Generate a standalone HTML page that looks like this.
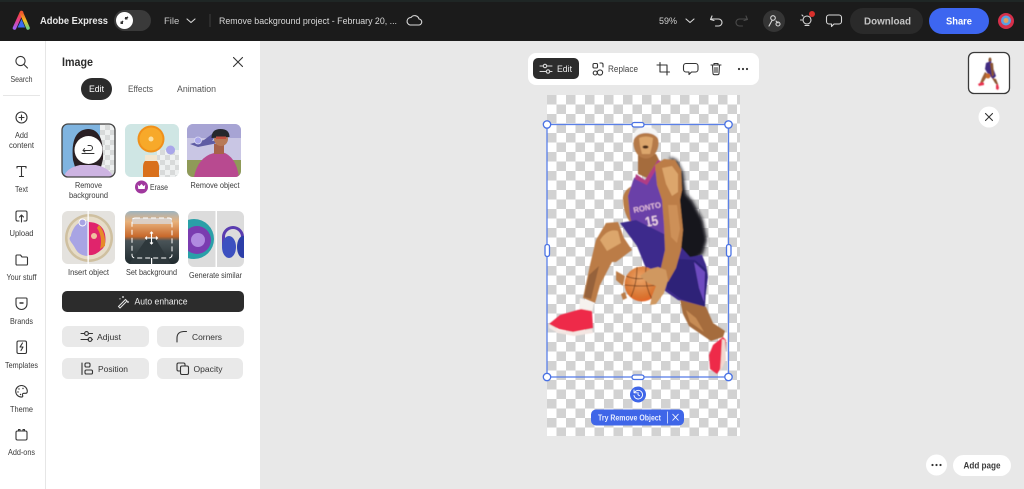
<!DOCTYPE html>
<html lang="en">
<head>
<meta charset="utf-8">
<title>Adobe Express</title>
<style>
html,body{margin:0;padding:0;width:1024px;height:489px;overflow:hidden;background:#e8e8e8}
svg{display:block;filter:blur(.35px)}
text{font-family:"Liberation Sans",sans-serif}
.l{font-size:8.4px;fill:#3a3a3a;text-anchor:middle}
.b{font-size:8.6px;fill:#333;}
.i{fill:none;stroke:#333;stroke-width:1.1;stroke-linecap:round;stroke-linejoin:round}
.w{fill:none;stroke:#d8d8d8;stroke-width:1.1;stroke-linecap:round;stroke-linejoin:round}
</style>
</head>
<body>
<svg width="1024" height="489" viewBox="0 0 1024 489" xmlns="http://www.w3.org/2000/svg">
<defs>
<pattern id="ck" x="547" y="95" width="19" height="19" patternUnits="userSpaceOnUse">
<rect width="19" height="19" fill="#fff"/>
<rect width="9.5" height="9.5" fill="#d2d2d2"/>
<rect x="9.5" y="9.5" width="9.5" height="9.5" fill="#d2d2d2"/>
</pattern>
<pattern id="ck2" x="0" y="0" width="10" height="10" patternUnits="userSpaceOnUse">
<rect width="10" height="10" fill="#eef0f0"/>
<rect width="5" height="5" fill="#d8dada"/>
<rect x="5" y="5" width="5" height="5" fill="#d8dada"/>
</pattern>
<clipPath id="c1"><rect x="62" y="124" width="53" height="53" rx="6"/></clipPath>
<clipPath id="c2"><rect x="125" y="124" width="54" height="53" rx="6"/></clipPath>
<clipPath id="c3"><rect x="187" y="124" width="54" height="53" rx="6"/></clipPath>
<clipPath id="c4"><rect x="62" y="211" width="53" height="53" rx="6"/></clipPath>
<clipPath id="c5"><rect x="125" y="211" width="54" height="53" rx="6"/></clipPath>
<clipPath id="c6"><rect x="188" y="211" width="56" height="56" rx="6"/></clipPath>
<linearGradient id="lgL" x1="0" y1="1" x2="0" y2="0"><stop offset="0" stop-color="#a060f0"/><stop offset=".5" stop-color="#e83e8c"/><stop offset="1" stop-color="#f04a30"/></linearGradient>
<linearGradient id="lgR" x1="0" y1="0" x2="0" y2="1"><stop offset="0" stop-color="#f2582c"/><stop offset=".5" stop-color="#f4c020"/><stop offset="1" stop-color="#70d080"/></linearGradient>
<linearGradient id="road" x1="0" y1="0" x2="0" y2="1"><stop offset="0" stop-color="#9fb4c0"/><stop offset=".2" stop-color="#e8b27c"/><stop offset=".48" stop-color="#c8692c"/><stop offset=".56" stop-color="#4a5458"/><stop offset="1" stop-color="#1f2a2e"/></linearGradient>
<radialGradient id="ballg" cx=".45" cy=".35" r=".75"><stop offset="0" stop-color="#eaa468"/><stop offset=".7" stop-color="#d9732f"/><stop offset="1" stop-color="#ee5a26"/></radialGradient>
<filter id="sb" x="-10%" y="-10%" width="120%" height="120%"><feGaussianBlur stdDeviation=".5"/></filter>
<filter id="sb2" x="-20%" y="-20%" width="140%" height="140%"><feGaussianBlur stdDeviation="1.5"/></filter>
</defs>

<!-- base -->
<rect width="1024" height="489" fill="#e8e8e8"/>

<!-- header -->
<rect width="1024" height="41" fill="#1b1b1b"/>
<rect width="1024" height="2" fill="#1f2625"/>
<path d="M21.500 12.500l-7 15.500" stroke="url(#lgL)" stroke-width="3.600" stroke-linecap="round" fill="none"/>
<path d="M21.500 13l6.500 15" stroke="url(#lgR)" stroke-width="3.600" stroke-linecap="round" fill="none"/>
<path d="M21.500 19l3.600 8.500h-7.500Z" fill="#3a6cf0"/>
<text x="40" y="24" font-size="10.200" font-weight="700" fill="#e8e8e8" textLength="68" lengthAdjust="spacingAndGlyphs">Adobe Express</text>
<rect x="114" y="10" width="37" height="21" rx="10.500" fill="#3a3a3a"/>
<circle cx="124.500" cy="20.500" r="8.500" fill="#fff"/>
<path d="M121 23l2-2M125 19l3-2" stroke="#333" stroke-width="1.500"/><rect x="120.500" y="21.500" width="2.500" height="2.500" fill="#333"/><rect x="125" y="17" width="2.500" height="2.500" fill="#333"/>
<text x="164" y="24" font-size="9.500" fill="#c8c8c8">File</text>
<path d="M187 19l4 3.500 4-3.500" class="w"/>
<path d="M210 14v13" stroke="#3c3c3c"/>
<text x="219" y="24" font-size="9.400" fill="#d8d8d8" textLength="178" lengthAdjust="spacingAndGlyphs">Remove background project - February 20, ...</text>
<path d="M410 25h8.500a3 3 0 0 0 .5-6 4.500 4.500 0 0 0-8-1.500 3.800 3.800 0 0 0-1 7.500Z" class="w"/>

<text x="659" y="24" font-size="9.500" fill="#d0d0d0" textLength="18" lengthAdjust="spacingAndGlyphs">59%</text>
<path d="M686 19l4 3.500 4-3.500" class="w"/>
<path d="M712 16l-1.500 3.500 3.500 1M711 19h7.500a3.500 3.500 0 0 1 0 7h-3" class="w"/>
<path d="M746 16l1.500 3.500-3.500 1M747 19h-7.500a3.500 3.500 0 0 0 0 7h3" fill="none" stroke="#4a4a4a" stroke-width="1.100" stroke-linecap="round" stroke-linejoin="round"/>
<circle cx="774" cy="21" r="11" fill="#353535"/>
<circle cx="773" cy="18" r="2.300" class="w"/><path d="M769 26l3-5.500M776 21l2 2" class="w"/><circle cx="778" cy="24" r="2" class="w"/>
<circle cx="807" cy="20" r="4" class="w"/><path d="M805 25.500h4M802 15l1 1M800.500 20h1.500" class="w"/>
<circle cx="812" cy="14" r="3" fill="#d9302c"/>
<path d="M829 15h10a2.500 2.500 0 0 1 2.500 2.500v4a2.500 2.500 0 0 1-2.500 2.500h-5l-2.500 2.500V24H829a2.500 2.500 0 0 1-2.500-2.500v-4A2.500 2.500 0 0 1 829 15Z" class="w"/>
<rect x="850" y="8" width="73" height="26" rx="13" fill="#2a2a2a"/>
<text x="887.500" y="24.500" font-size="10.500" font-weight="700" fill="#c4c4c4" text-anchor="middle" textLength="47" lengthAdjust="spacingAndGlyphs">Download</text>
<rect x="929" y="8" width="60" height="26" rx="13" fill="#3d66f0"/>
<text x="959" y="24.500" font-size="10.500" font-weight="700" fill="#fff" text-anchor="middle" textLength="26" lengthAdjust="spacingAndGlyphs">Share</text>
<circle cx="1006" cy="21" r="8" fill="#d6304a"/><circle cx="1006" cy="20.500" r="5" fill="#5aa0e0"/><circle cx="1006" cy="20.500" r="2.500" fill="#e0a060"/>

<!-- sidebar + panel -->
<rect x="0" y="41" width="260" height="448" fill="#fff"/>
<rect x="45" y="41" width="1" height="448" fill="#e6e6e6"/>
<rect x="3" y="95" width="37" height="1" fill="#e6e6e6"/>

<circle cx="20.500" cy="61" r="4.600" class="i"/><path d="M24 64.500l3.500 3.500" class="i"/>
<text x="21.500" y="82" class="l" textLength="22" lengthAdjust="spacingAndGlyphs">Search</text>
<circle cx="21.500" cy="117.500" r="5.500" class="i"/><path d="M21.500 115v5M19 117.500h5" class="i"/>
<text x="21.500" y="138" class="l" textLength="13" lengthAdjust="spacingAndGlyphs">Add</text><text x="21.500" y="148" class="l" textLength="25" lengthAdjust="spacingAndGlyphs">content</text>
<path d="M17 168v-1.500h9v1.500M21.500 166.500v10M19.500 176.500h4" class="i"/>
<text x="21.500" y="192" class="l" textLength="13" lengthAdjust="spacingAndGlyphs">Text</text>
<path d="M19 221h-1.500a1.500 1.500 0 0 1-1.500-1.500v-7a1.500 1.500 0 0 1 1.500-1.500h8a1.500 1.500 0 0 1 1.500 1.500v7a1.500 1.500 0 0 1-1.500 1.500H24M21.500 222v-7M19.500 217l2-2 2 2" class="i"/>
<text x="21.500" y="236" class="l" textLength="24" lengthAdjust="spacingAndGlyphs">Upload</text>
<path d="M16 264v-8a1 1 0 0 1 1-1h3.500l1.500 2h4.500a1 1 0 0 1 1 1v6a1 1 0 0 1-1 1H17a1 1 0 0 1-1-1Z" class="i"/>
<text x="21.500" y="280" class="l" textLength="30" lengthAdjust="spacingAndGlyphs">Your stuff</text>
<path d="M17 298h9a1 1 0 0 1 1 1v5a5.500 5.500 0 0 1-11 0v-5a1 1 0 0 1 1-1Z" class="i"/><path d="M19.500 303h4" stroke="#333" stroke-width="1.500"/>
<text x="21.500" y="324" class="l" textLength="23" lengthAdjust="spacingAndGlyphs">Brands</text>
<rect x="17" y="341" width="9.500" height="12.500" rx="1.500" class="i"/><path d="M22.500 343l-2.500 4h3l-2 3.500" class="i"/>
<text x="21.500" y="368" class="l" textLength="33" lengthAdjust="spacingAndGlyphs">Templates</text>
<path d="M21.500 385.500a5.800 5.800 0 1 0 0 11.600c1.500 0 1.500-1 1-2-.4-1 .3-1.800 1.500-1.800h1.500c1 0 1.800-.8 1.800-2.200a5.800 5.800 0 0 0-5.800-5.600Z" class="i"/><circle cx="19" cy="389" r=".7" fill="#333"/><circle cx="18" cy="392" r=".7" fill="#333"/><circle cx="23" cy="388.500" r=".7" fill="#333"/><circle cx="20.500" cy="394.500" r=".7" fill="#333"/>
<text x="21.500" y="412" class="l" textLength="23" lengthAdjust="spacingAndGlyphs">Theme</text>
<rect x="16" y="431" width="11" height="9" rx="1.500" class="i"/><path d="M18.500 431v-1.500h1.500V431M23 431v-1.500h1.500V431" class="i"/>
<text x="21.500" y="455" class="l" textLength="27" lengthAdjust="spacingAndGlyphs">Add-ons</text>

<text x="62" y="66" font-size="11.500" font-weight="700" fill="#2c2c2c" textLength="31" lengthAdjust="spacingAndGlyphs">Image</text>
<path d="M233.500 57.500l9 9M242.500 57.500l-9 9" class="i"/>
<rect x="81" y="78" width="31" height="22" rx="11" fill="#2c2c2c"/>
<text x="96.500" y="92" font-size="9.200" fill="#fff" text-anchor="middle" textLength="15" lengthAdjust="spacingAndGlyphs">Edit</text>
<text x="140.500" y="92" font-size="9.200" fill="#555" text-anchor="middle" textLength="25" lengthAdjust="spacingAndGlyphs">Effects</text>
<text x="196.500" y="92" font-size="9.200" fill="#555" text-anchor="middle" textLength="39" lengthAdjust="spacingAndGlyphs">Animation</text>

<!-- thumb 1 -->
<g clip-path="url(#c1)">
<rect x="62" y="124" width="53" height="53" fill="#7fb4e0"/>
<rect x="100" y="124" width="15" height="53" fill="url(#ck2)"/>
<path d="M73 160q-3-30 15-31 16 0 15 30l-2 8H75Z" fill="#2a2024"/>
<path d="M64 177q2-9 16-12h16q14 3 17 12Z" fill="#cdb4e2"/>
</g>
<circle cx="88.500" cy="150" r="14" fill="#fff"/>
<path d="M84.500 148.500l-1.500 2 2 1.500M83 150.500h7a2.500 2.500 0 0 0 0-5h-2M82 153.500h12" fill="none" stroke="#333" stroke-width="1" stroke-linecap="round" stroke-linejoin="round"/>
<rect x="62" y="124" width="53" height="53" rx="6" fill="none" stroke="#444" stroke-width="1.300"/>

<!-- thumb 2 -->
<g clip-path="url(#c2)">
<rect x="125" y="124" width="54" height="53" fill="#cfe6e4"/>
<rect x="157" y="150" width="22" height="27" fill="url(#ck2)"/>
<circle cx="151" cy="139" r="13.500" fill="#f0901a"/><circle cx="151" cy="139" r="11.500" fill="#f7a92a"/><circle cx="151" cy="139" r="2.500" fill="#fbe0a0"/>
<rect x="145" y="155" width="12" height="6" fill="#f2e6d0"/>
<path d="M145 161h12q2 2 2 6v10h-16v-10q0-4 2-6Z" fill="#d9701c"/>
</g>
<circle cx="170.500" cy="150" r="4.500" fill="#a9a6ea"/>

<!-- thumb 3 -->
<g clip-path="url(#c3)">
<rect x="187" y="124" width="54" height="53" fill="#c9c6e4"/>
<rect x="187" y="124" width="54" height="14" fill="#a7a4d4"/>
<path d="M187 160h54v17h-54Z" fill="#8f9a58"/>
<path d="M190 144l14-4 8-6 4 1-4 6 8-1-2 3-20 4Z" fill="#5f5ca4"/>
<path d="M194 177q4-20 20-24l8-1q14 4 17 25Z" fill="#b84a90"/>
<rect x="214" y="144" width="10" height="10" fill="#a8624a"/>
<circle cx="221" cy="139" r="7" fill="#b87a58"/>
<path d="M211.500 138q0-9 9-9t9 8Z" fill="#26282c"/>
<rect x="216" y="136.500" width="10" height="2.500" fill="#c05040"/>
</g>
<circle cx="198" cy="140.500" r="3.500" fill="#a9a6ea" stroke="#dcdcf4" stroke-width=".8"/>

<!-- thumb 4 -->
<g clip-path="url(#c4)">
<rect x="62" y="211" width="53" height="53" fill="#e4e2de"/>
<circle cx="89" cy="238" r="24" fill="#cfc0a0"/><circle cx="89" cy="238" r="21.500" fill="#e6dcc8"/>
<path d="M88 221q-10 0-14 7-3 5-3 8-3 2 0 6t4 6q4 8 13 8Z" fill="#a8a4e4"/>
<path d="M88 222q14 0 17 12 2 12-4 16-6 6-13 5Z" fill="#e0246c"/>
<path d="M99 225q7 8 6 21l-5 3q3-12-3-21Z" fill="#e68a28"/>
<circle cx="94" cy="236" r="3" fill="#f0c0a0"/>
<rect x="87.500" y="211" width="1.300" height="53" fill="#fff"/>
</g>
<circle cx="82.500" cy="222.500" r="3.500" fill="#a8a4e4" stroke="#fff" stroke-width=".9"/>

<!-- thumb 5 -->
<g clip-path="url(#c5)">
<rect x="125" y="211" width="54" height="53" fill="url(#road)"/>
<path d="M147 238h8l16 26h-42Z" fill="#2e383c"/>
<rect x="132" y="218" width="40" height="6" fill="#d8d8dc" opacity=".75"/>
<rect x="132" y="218" width="40" height="40" rx="3" fill="none" stroke="#fff" stroke-width="1" stroke-dasharray="5 3"/>
<path d="M151.500 232v12M145.500 238h12M150 233.500l1.500-1.500 1.500 1.500M150 242.500l1.500 1.500 1.500-1.500M147 236.500l-1.500 1.500 1.500 1.500M156 236.500l1.500 1.500-1.500 1.500" fill="none" stroke="#fff" stroke-width="1.100"/>
<rect x="151" y="258" width="1.200" height="6" fill="#fff"/>
</g>

<!-- thumb 6 -->
<g clip-path="url(#c6)">
<rect x="188" y="211" width="56" height="56" fill="#dcdcdc"/>
<circle cx="194" cy="239" r="20" fill="#2aa0a8"/><circle cx="197" cy="240" r="14" fill="#7a3cb0"/><circle cx="198" cy="240" r="7" fill="#b08ae0"/>
<path d="M222 246v-9a11 11 0 0 1 22 0v2h-3v-2a8 8 0 0 0-16 0v9Z" fill="#5a3cb0"/>
<ellipse cx="229" cy="247" rx="7" ry="11" fill="#3c50c0"/><ellipse cx="243" cy="247" rx="6" ry="11" fill="#2c3ea8"/>
<rect x="215.500" y="211" width="1.500" height="56" fill="#fff"/>
</g>

<text x="88.500" y="188" class="l" textLength="27" lengthAdjust="spacingAndGlyphs">Remove</text>
<text x="88.500" y="198" class="l" textLength="39" lengthAdjust="spacingAndGlyphs">background</text>
<circle cx="141.500" cy="187" r="6.500" fill="#a0389e"/>
<path d="M137.700 184.500l1.600 1.700 2.200-2.200 2.200 2.200 1.600-1.700-.6 4.500h-6.400Z" fill="#fff"/>
<text x="159" y="190" class="l" textLength="18" lengthAdjust="spacingAndGlyphs">Erase</text>
<text x="215" y="188" class="l" textLength="49" lengthAdjust="spacingAndGlyphs">Remove object</text>
<text x="88.500" y="275" class="l" textLength="41" lengthAdjust="spacingAndGlyphs">Insert object</text>
<text x="151.500" y="275" class="l" textLength="51" lengthAdjust="spacingAndGlyphs">Set background</text>
<text x="215.500" y="278" class="l" textLength="53" lengthAdjust="spacingAndGlyphs">Generate similar</text>

<!-- buttons -->
<rect x="62" y="291" width="182" height="21" rx="5" fill="#2c2c2c"/>
<path d="M118.500 306.500l7-7 1.500 1.500-7 7Z" fill="none" stroke="#e8e8e8" stroke-width="1"/><path d="M123 296v2M122 297h2M128 301v2M127 302h2M120 298v1.500" stroke="#e8e8e8" stroke-width=".8"/>
<text x="161" y="304.500" font-size="9.200" fill="#eee" text-anchor="middle" textLength="53" lengthAdjust="spacingAndGlyphs">Auto enhance</text>

<rect x="62" y="326" width="87" height="21" rx="6" fill="#e9e9e9"/>
<rect x="157" y="326" width="87" height="21" rx="6" fill="#e9e9e9"/>
<rect x="62" y="358" width="87" height="21" rx="6" fill="#e9e9e9"/>
<rect x="157" y="358" width="86" height="21" rx="6" fill="#e9e9e9"/>

<path d="M81 333.500h3.500M89 333.500h3.500M81 339.500h7.500M92 339.500h.5" class="i"/><circle cx="86.500" cy="333.500" r="1.900" class="i"/><circle cx="90" cy="339.500" r="1.900" class="i"/>
<text x="97" y="340" class="b" textLength="24" lengthAdjust="spacingAndGlyphs">Adjust</text>
<path d="M177 342v-4q0-6 6.500-6.500h3" fill="none" stroke="#333" stroke-width="1.100" stroke-linecap="round"/>
<text x="192" y="340" class="b" textLength="30" lengthAdjust="spacingAndGlyphs">Corners</text>
<path d="M82 363v11.500" class="i"/><rect x="85" y="363" width="5" height="4" rx="1.300" class="i"/><rect x="85" y="370" width="7.500" height="4" rx="1.300" class="i"/>
<text x="98" y="372" class="b" textLength="30" lengthAdjust="spacingAndGlyphs">Position</text>
<rect x="177" y="363" width="8" height="8" rx="1.500" class="i"/><rect x="180.500" y="366" width="8" height="8.500" rx="1.500" fill="#e9e9e9" stroke="#333" stroke-width="1.100"/>
<text x="193.500" y="372" class="b" textLength="29" lengthAdjust="spacingAndGlyphs">Opacity</text>

<!-- toolbar -->
<rect x="528" y="53" width="231" height="32" rx="8" fill="#fff"/>
<rect x="533" y="58" width="46" height="21" rx="5" fill="#2c2c2c"/>
<path d="M540 66h3M547 66h5M540 71.500h6M550 71.500h2" class="w"/><circle cx="545" cy="66" r="1.700" class="w"/><circle cx="548" cy="71.500" r="1.700" class="w"/>
<text x="557" y="72" font-size="9" fill="#eee" textLength="15" lengthAdjust="spacingAndGlyphs">Edit</text>
<rect x="593" y="63.500" width="4.500" height="4.500" rx="1.200" class="i"/><circle cx="600" cy="72.500" r="2.600" class="i"/><circle cx="595.200" cy="73" r="2" class="i"/><path d="M600 63h1.500a1.500 1.500 0 0 1 1.500 1.500V67" class="i"/>
<text x="608" y="72" font-size="9" fill="#444" textLength="30" lengthAdjust="spacingAndGlyphs">Replace</text>
<path d="M660 62.500v9.500h9.500M657 65h10v10" class="i"/>
<path d="M686 63.500h9.500a2.500 2.500 0 0 1 2.500 2.500v3.500a2.500 2.500 0 0 1-2.500 2.500h-4l-2.500 2.500V72H686a2.500 2.500 0 0 1-2.500-2.500V66a2.500 2.500 0 0 1 2.500-2.500Z" class="i"/>
<path d="M711 65h10M712.500 65l.5 8.500a1.500 1.500 0 0 0 1.500 1.200h3a1.500 1.500 0 0 0 1.500-1.200l.5-8.500M714 65v-1.500h4V65M715 67.500v5M717 67.500v5" class="i"/>
<circle cx="739" cy="69" r="1.100" fill="#333"/><circle cx="743" cy="69" r="1.100" fill="#333"/><circle cx="747" cy="69" r="1.100" fill="#333"/>

<!-- canvas -->
<rect x="547" y="95" width="193" height="341" fill="url(#ck)"/>

<!-- player -->
<g filter="url(#sb)">
<!-- dark hair/back -->
<path d="M670 157l7 3 6 12 3 22 6 6 11 20 4 20-4 14-8 6-18 2-8-50Z" fill="#16131f" filter="url(#sb2)"/>
<!-- left arm behind -->
<path d="M632 186q-8 4-9 12 0 14 7 24l8 2-1-24 1-14Z" fill="#b97c46"/>
<!-- neck -->
<path d="M638 154h18l3 6-12 18-9-4Z" fill="#a56c3c"/>
<!-- jersey -->
<path d="M634 178l4-2 8 5 12-21 4 2 4 40 6 24 4 20-22 12-20-24-4-18-2-20Z" fill="#6a40a8"/>
<path d="M636 174l9 6 13-20 3 1-14 24-12-6Z" fill="#b03c84"/>
<text x="634" y="213" font-size="8" font-weight="700" fill="#e0b8d8" transform="rotate(-12 634 213)" textLength="28" lengthAdjust="spacingAndGlyphs">RONTO</text>
<text x="646" y="227" font-size="14" font-weight="700" fill="#ecd0e4" transform="rotate(-10 646 227)" textLength="13" lengthAdjust="spacingAndGlyphs">15</text>
<!-- shorts -->
<path d="M620 223l16-3 14 7 16 8 6 2 18 20 12-2 4 10 2 12-4 30-26-7-20-14-13-20-8-20Z" fill="#3c2c8c"/>
<path d="M665 258l30 2 12 10-2 37-24-8-14-10Z" fill="#2e2278"/>
<path d="M694 262l5 26 5 14 1-30Z" fill="#6e4cc0"/>
<!-- right arm -->
<path d="M655 165l9-6 11 1 6 10 1 20-2 10 3 30-2 20-5 18-8 14-8-10 5-22-1-25-2-25-5-15Z" fill="#bc7d46"/>
<path d="M662 168l10-2 6 8 0 18-6 4-6-12Z" fill="#dca66c"/>
<path d="M668 205l9 0 3 24-3 14-6-6Z" fill="#cd9058"/>
<!-- thigh + shin -->
<path d="M606 223l12-1 6 16 8 12-16 12-4 0-12 23-5 18-12-5 7-33 6-25Z" fill="#bb7c46"/>
<path d="M600 240q8-12 18-9l3 12-14 8Z" fill="#dca66c"/>
<path d="M589 275l10-9-8 33-7-2Z" fill="#96623a"/>
<!-- right leg -->
<path d="M680 300l3 14 6 12 22 15 12-4 2-6-12-8-7-16Z" fill="#a56c3c"/>
<path d="M686 310l4 12 14 10-8-14Z" fill="#c78c54"/>
<!-- ball -->
<circle cx="642" cy="284" r="17.500" fill="url(#ballg)"/>
<path d="M626 276q14 6 32-1M631 297q6-14 6-30M652 299q-8-14-6-32M625 285q16 2 34 0" fill="none" stroke="#6a3a1c" stroke-width=".8"/>
<!-- hands -->
<path d="M616 271l9 5-2 10-7-6ZM621 294l4-2 2 6-4 2Z" fill="#bb7c46"/>
<path d="M640 276l10-7 8-2 8 3 2 10-4 13-8 11-6 1 2-9 4-10-8-3Z" fill="#d09860"/>
<!-- head -->
<ellipse cx="646" cy="143" rx="12.500" ry="15.500" fill="#b57a4a"/>
<path d="M633.500 140q-1-13 12.500-13 13 0 13 13-4-7-13-7-9 0-12.500 7Z" fill="#f5f5f5"/>
<path d="M639 138q7-3 14 0l-1 8-2 8h-8l-2-8Z" fill="#dca66c"/>
<ellipse cx="645.500" cy="147" rx="3" ry="1.600" fill="#4a2a18"/>
<!-- left sock + shoe -->
<path d="M580 298l14 5-2 10-13-3Z" fill="#f6f2ee"/>
<path d="M549 324l11-9 21-6 11 2 1 17-20 4-14-3Z" fill="#ee2a48"/>
<path d="M549 324l10 6 14 2 19-3 1 4-19 3-16-3-9-5Z" fill="#f4e6e2"/>
<!-- right shoe -->
<path d="M713 345l10-8 3 3-1 22-8 12-7-5-1-14Z" fill="#ee2a48"/>
<path d="M722 339l3 1 1 20-6 12 1-14Z" fill="#f0d8d0"/>
</g>

<!-- selection -->
<rect x="547" y="124.500" width="181.500" height="252.500" fill="none" stroke="#5a80e8" stroke-width="1.300"/>
<g fill="#fff" stroke="#4a72e4" stroke-width="1.300">
<circle cx="547" cy="124.500" r="3.700"/><circle cx="728.500" cy="124.500" r="3.700"/>
<circle cx="547" cy="377" r="3.700"/><circle cx="728.500" cy="377" r="3.700"/>
<rect x="632" y="122.500" width="12" height="4.500" rx="2.200"/>
<rect x="632" y="375" width="12" height="4.500" rx="2.200"/>
<rect x="545" y="244.500" width="4.500" height="12" rx="2.200"/>
<rect x="726.500" y="244.500" width="4.500" height="12" rx="2.200"/>
</g>
<circle cx="638" cy="394.500" r="8" fill="#3f66e8"/>
<path d="M634.500 392.500a4.300 4.300 0 1 1-.5 3M634 390v2.800h2.800M638 392.500v2.300l1.500 1" fill="none" stroke="#fff" stroke-width=".9" stroke-linecap="round" stroke-linejoin="round"/>
<rect x="591" y="409.500" width="93" height="16" rx="5" fill="#3f66e8"/>
<text x="598" y="420.500" font-size="8" font-weight="700" fill="#e8eeff" textLength="63" lengthAdjust="spacingAndGlyphs">Try Remove Object</text>
<path d="M667.500 411.500v12" stroke="#dfe6ff" stroke-width=".8"/>
<path d="M672.500 414l6 6.500M678.500 414l-6 6.500" stroke="#fff" stroke-width=".9" fill="none"/>

<!-- page thumb -->
<rect x="968.500" y="52.500" width="41" height="41" rx="5.500" fill="#fff" stroke="#3a3a3a" stroke-width="1.300"/>
<g filter="url(#sb)">
<ellipse cx="990" cy="60" rx="1.500" ry="2.500" fill="#8a5430"/>
<path d="M986 63l5-2 2 7 3 8-3 3-5-5-3-5Z" fill="#3f2a80"/>
<path d="M990 63l3 0 1 12-2 2Z" fill="#8a5430"/>
<path d="M985 72l-3 6-2 5 2 1 4-6 3-3Z" fill="#9a6038"/>
<circle cx="988" cy="76" r="2.500" fill="#c86a2a"/>
<path d="M978 84l4-2 2 1v2l-5 1Z" fill="#e83050"/>
<path d="M992 78l3 5 2 2 1-1-2-5Z" fill="#8a5430"/>
<path d="M996 85l2-1 1 4-1 2-2-1Z" fill="#e83050"/>
</g>
<circle cx="989" cy="117" r="10.500" fill="#fff"/>
<path d="M985.500 113.500l7 7M992.500 113.500l-7 7" class="i"/>

<!-- bottom right -->
<circle cx="936.500" cy="465" r="10.500" fill="#fff"/>
<circle cx="932.500" cy="465" r="1.100" fill="#333"/><circle cx="936.500" cy="465" r="1.100" fill="#333"/><circle cx="940.500" cy="465" r="1.100" fill="#333"/>
<rect x="953" y="455" width="58" height="21" rx="10.500" fill="#fff"/>
<text x="982" y="468.500" font-size="9.200" font-weight="700" fill="#3a3a3a" text-anchor="middle" textLength="37" lengthAdjust="spacingAndGlyphs">Add page</text>
</svg>
</body>
</html>
